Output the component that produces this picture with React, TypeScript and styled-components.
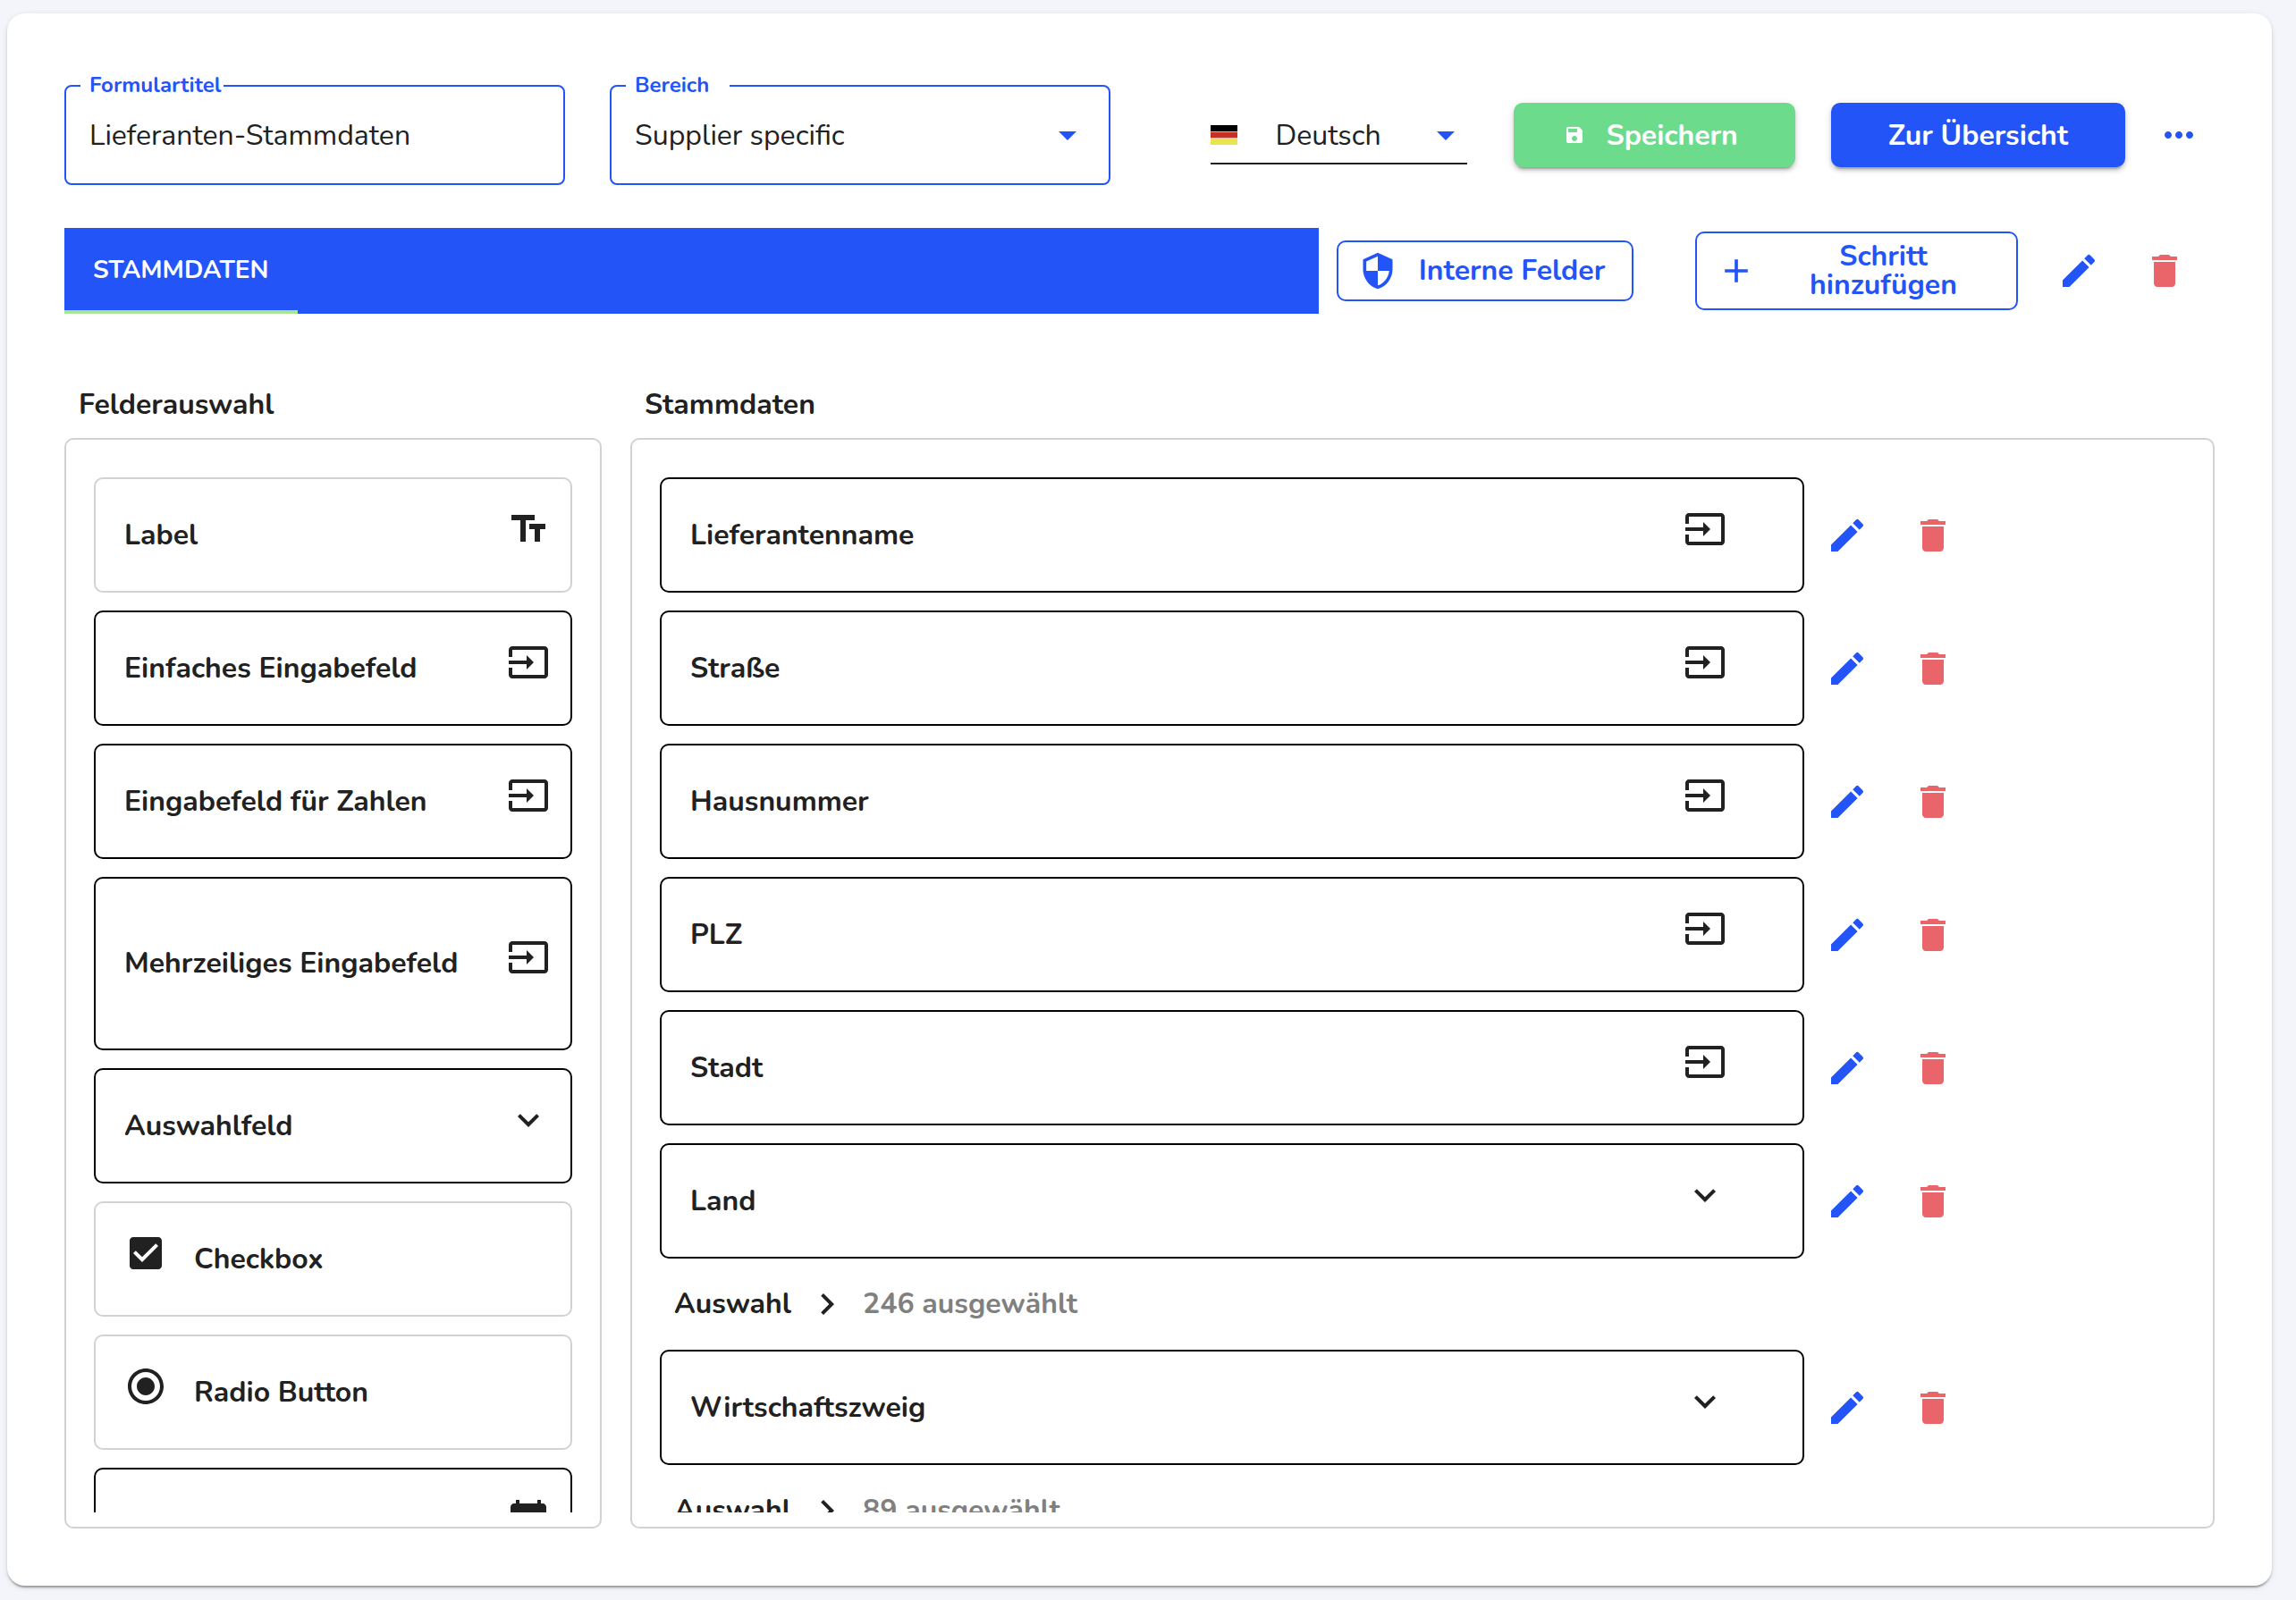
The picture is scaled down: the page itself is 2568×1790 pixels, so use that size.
import React from 'react';
import styled, { createGlobalStyle, css } from 'styled-components';

const color = {
  page: '#f4f5fb',
  blue: '#2354f8',
  green: '#6cdc8c',
  lime: '#a9e595',
  red: '#e96569',
  ink: '#212121',
  muted: '#808080',
  line: '#d2d2d2',
};

const GlobalStyle = createGlobalStyle`
  *, *::before, *::after { box-sizing: border-box; }
  body {
    margin: 0;
    background: ${color.page};
    color: ${color.ink};
    font-family: Nunito, Lato, 'Open Sans', sans-serif;
    font-size: 32px;
    line-height: 44px;
  }
  button, input, select { font: inherit; color: inherit; margin: 0; }
`;

/* ---------- icons ---------- */

const paths = {
  edit: 'M3 17.25V21h3.75L17.81 9.94l-3.75-3.75L3 17.25zM20.71 7.04c.39-.39.39-1.02 0-1.41l-2.34-2.34a.9959.9959 0 0 0-1.41 0l-1.83 1.83 3.75 3.75 1.83-1.83z',
  trash: 'M6 19c0 1.1.9 2 2 2h8c1.1 0 2-.9 2-2V7H6v12zM19 4h-3.5l-1-1h-5l-1 1H5v2h14V4z',
  more: 'M6 10c-1.1 0-2 .9-2 2s.9 2 2 2 2-.9 2-2-.9-2-2-2zm12 0c-1.1 0-2 .9-2 2s.9 2 2 2 2-.9 2-2-.9-2-2-2zm-6 0c-1.1 0-2 .9-2 2s.9 2 2 2 2-.9 2-2-.9-2-2-2z',
  save: 'M17 3H5c-1.11 0-2 .9-2 2v14c0 1.1.89 2 2 2h14c1.1 0 2-.9 2-2V7l-4-4zm-5 16c-1.66 0-3-1.34-3-3s1.34-3 3-3 3 1.34 3 3-1.34 3-3 3zm3-10H5V5h10v4z',
  shield: 'M12 1L3 5v6c0 5.55 3.84 10.74 9 12 5.16-1.26 9-6.45 9-12V5l-9-4zm0 10.99h7c-.53 4.12-3.28 7.79-7 8.94V12H5V6.3l7-3.11v8.8z',
  plus: 'M19 13h-6v6h-2v-6H5v-2h6V5h2v6h6v2z',
  triangle: 'M7 10l5 5 5-5z',
  text: 'M2.5 4v3h5v12h3V7h5V4h-13zm19 5h-9v3h3v7h3v-7h3V9z',
  input: 'M21 3.01H3c-1.1 0-2 .9-2 2V9h2V4.99h18v14.03H3V15H1v4.01c0 1.1.9 1.98 2 1.98h18c1.1 0 2-.88 2-1.98v-14c0-1.11-.9-2-2-2zM11 16l4-4-4-4v3H1v2h10v3z',
  down: 'M16.59 8.59L12 13.17 7.41 8.59 6 10l6 6 6-6z',
  right: 'M10 6L8.59 7.41 13.17 12l-4.58 4.59L10 18l6-6z',
  checkbox: 'M19 3H5c-1.11 0-2 .9-2 2v14c0 1.1.89 2 2 2h14c1.11 0 2-.9 2-2V5c0-1.1-.89-2-2-2zm-9 14l-5-5 1.41-1.41L10 14.17l7.59-7.59L19 8l-9 9z',
  radio: 'M12 7c-2.76 0-5 2.24-5 5s2.24 5 5 5 5-2.24 5-5-2.24-5-5-5zm0-5C6.48 2 2 6.48 2 12s4.48 10 10 10 10-4.48 10-10S17.52 2 12 2zm0 18c-4.42 0-8-3.58-8-8s3.58-8 8-8 8 3.58 8 8-3.58 8-8 8z',
  calendar: 'M20 3h-1V1h-2v2H7V1H5v2H4c-1.1 0-2 .9-2 2v16c0 1.1.9 2 2 2h16c1.1 0 2-.9 2-2V5c0-1.1-.9-2-2-2zm0 18H4V8h16v13z',
};
type IconName = keyof typeof paths;

const Svg = styled.svg<{ $size: number }>`
  display: block;
  flex: none;
  width: ${(p) => p.$size}px;
  height: ${(p) => p.$size}px;
  fill: currentColor;
`;

const Icon = ({ name, size = 48 }: { name: IconName; size?: number }) => (
  <Svg viewBox="0 0 24 24" $size={size} aria-hidden="true">
    <path d={paths[name]} />
  </Svg>
);

const FlagSvg = styled.svg`
  display: block;
  flex: none;
  width: 30px;
  height: 22px;
`;

const GermanFlag = () => (
  <FlagSvg viewBox="0 0 30 22" aria-hidden="true">
    <rect width="30" height="22" fill="#e8b0a8" />
    <rect width="30" height="7" fill="#000" />
    <rect y="8" width="30" height="6" fill="#c72f22" />
    <rect y="15" width="30" height="7" fill="#e9e44c" />
  </FlagSvg>
);

/* ---------- page frame ---------- */

const Page = styled.div`
  display: flex;
  height: 100vh;
  padding: 15px 27px 16px 8px;
`;

const Card = styled.main`
  flex: 1;
  min-width: 0;
  display: flex;
  flex-direction: column;
  padding: 80px 64px 64px;
  background: #fff;
  border-radius: 20px;
  box-shadow: 0 4px 2px -2px rgba(0, 0, 0, 0.2), 0 2px 2px rgba(0, 0, 0, 0.14),
    0 2px 6px rgba(0, 0, 0, 0.12);
`;

/* ---------- header ---------- */

const Header = styled.header`
  display: flex;
  align-items: center;
  margin-bottom: 48px;
`;

const Fields = styled.div`
  flex: 0 1 1170px;
  display: flex;
  gap: 50px;
`;

const Field = styled.div`
  position: relative;
  flex: 1;
  min-width: 0;
  height: 112px;
  border: 2px solid ${color.blue};
  border-radius: 8px;
`;

const FieldLabel = styled.label<{ $gap: number }>`
  position: absolute;
  top: -18px;
  left: 16px;
  padding: 0 ${(p) => p.$gap}px 0 10px;
  background: #fff;
  color: ${color.blue};
  font-size: 24px;
  font-weight: 700;
  line-height: 32px;
`;

const control = css`
  width: 100%;
  height: 100%;
  border: 0;
  outline: 0;
  background: transparent;
  appearance: none;
`;

const TextInput = styled.input`
  ${control}
  padding: 0 26px;
`;

const Select = styled.select<{ $indent: number }>`
  ${control}
  padding: 2px 48px 0 ${(p) => p.$indent}px;
`;

/* Drop-down arrow laid over the right end of a select */
const Arrow = styled.span<{ $right: number }>`
  position: absolute;
  top: 0;
  bottom: 0;
  right: ${(p) => p.$right}px;
  display: flex;
  align-items: center;
  color: ${color.blue};
  pointer-events: none;
`;

const Actions = styled.div`
  display: flex;
  align-items: center;
  margin-left: auto;
`;

const Language = styled.div`
  display: flex;
  align-items: center;
  width: 287px;
  height: 66px;
  margin-right: 52px;
  padding-top: 2px;
  border-bottom: 2px solid ${color.ink};
`;

const LanguagePicker = styled.div`
  position: relative;
  flex: 1;
  height: 100%;
`;

const SolidButton = styled.button<{ $bg: string }>`
  display: flex;
  align-items: center;
  height: 72px;
  padding: 2px 64px 0;
  border: 0;
  border-radius: 10px;
  background: ${(p) => p.$bg};
  color: #fff;
  font-weight: 700;
  white-space: nowrap;
  box-shadow: 0 6px 2px -4px rgba(0, 0, 0, 0.2), 0 4px 4px rgba(0, 0, 0, 0.14),
    0 2px 10px rgba(0, 0, 0, 0.12);

  & + & { margin-left: 40px; }
  svg { margin: 0 23px 2px -8px; }
`;

const IconButton = styled.button<{ $color: string }>`
  display: flex;
  align-items: center;
  justify-content: center;
  flex: none;
  width: 96px;
  height: 96px;
  padding: 0;
  border: 0;
  background: transparent;
  color: ${(p) => p.$color};
`;

const MoreButton = styled(IconButton)`
  width: 80px;
  margin-left: 20px;
`;

/* ---------- step bar ---------- */

const StepBar = styled.div`
  display: flex;
  align-items: center;
  margin-bottom: 80px;
`;

const Tabs = styled.div`
  flex: 1;
  display: flex;
  height: 96px;
  margin-right: 20px;
  background: ${color.blue};
`;

const Tab = styled.button`
  padding: 2px 32px 0;
  border: 0;
  border-bottom: 4px solid ${color.lime};
  background: transparent;
  color: #fff;
  font-size: 28px;
  font-weight: 700;
`;

const StepActions = styled.div`
  display: flex;
  align-items: center;
  gap: 69px;
`;

const OutlineButton = styled.button<{ $width: number }>`
  display: flex;
  align-items: center;
  gap: 22px;
  flex: none;
  width: ${(p) => p.$width}px;
  padding: 10px 28px 10px 22px;
  border: 2px solid ${color.blue};
  border-radius: 10px;
  background: transparent;
  color: ${color.blue};
  font-weight: 700;
  line-height: 32px;
`;

const ButtonText = styled.span`
  flex: 1;
`;

const StepTools = styled.div`
  display: flex;
  margin: 0 8px 0 20px;
`;

/* ---------- panels ---------- */

const Columns = styled.div`
  flex: 1;
  min-height: 0;
  display: grid;
  grid-template-columns: minmax(0, 601fr) minmax(0, 1772fr);
  column-gap: 32px;
`;

const Column = styled.section`
  display: flex;
  flex-direction: column;
  min-height: 0;
`;

const ColumnTitle = styled.h2`
  margin: 0 0 15px;
  padding-left: 16px;
  font-size: 32px;
  font-weight: 700;
  line-height: 44px;
`;

const Panel = styled.div`
  flex: 1;
  min-height: 0;
  display: flex;
  padding: 0 31px 16px;
  border: 2px solid ${color.line};
  border-radius: 10px;
`;

const List = styled.ul`
  flex: 1;
  display: flex;
  flex-direction: column;
  gap: 20px;
  margin: 0;
  padding: 42px 0 0;
  list-style: none;
  overflow-y: auto;
  scrollbar-width: none;
`;

const Entry = styled.li`
  display: flex;
  align-items: center;
  flex: none;
`;

const Box = styled.div<{ $light?: boolean; $tall?: boolean; $placed?: boolean }>`
  display: flex;
  align-items: center;
  flex: none;
  width: ${(p) => (p.$placed ? '75%' : '100%')};
  height: ${(p) => (p.$tall ? 194 : 129)}px;
  padding: 0 ${(p) => (p.$placed ? 85 : 23)}px 0 32px;
  border: 2px solid ${(p) => (p.$light ? color.line : '#000')};
  border-radius: 10px;
  font-weight: 700;
`;

const BoxText = styled.span`
  flex: 1;
`;

const BoxIcon = styled.span`
  padding-bottom: 14px;
`;

const Choice = styled.label`
  display: flex;
  align-items: center;
  gap: 30px;
`;

const ChoiceMark = styled.span`
  position: relative;
  padding-bottom: 14px;
`;

const ChoiceInput = styled.input`
  position: absolute;
  inset: 0;
  width: 48px;
  height: 48px;
  opacity: 0;
`;

const Selection = styled.li`
  display: flex;
  align-items: center;
  flex: none;
  gap: 16px;
  padding: 7px 16px;
  font-weight: 700;
`;

const Count = styled.span`
  color: ${color.muted};
`;

/* ---------- data ---------- */

type PaletteItem = {
  label?: string;
  icon: IconName;
  light?: boolean;
  tall?: boolean;
  choice?: 'checkbox' | 'radio';
};

const palette: PaletteItem[] = [
  { label: 'Label', icon: 'text', light: true },
  { label: 'Einfaches Eingabefeld', icon: 'input' },
  { label: 'Eingabefeld für Zahlen', icon: 'input' },
  { label: 'Mehrzeiliges Eingabefeld', icon: 'input', tall: true },
  { label: 'Auswahlfeld', icon: 'down' },
  { label: 'Checkbox', icon: 'checkbox', light: true, choice: 'checkbox' },
  { label: 'Radio Button', icon: 'radio', light: true, choice: 'radio' },
  { icon: 'calendar' },
];

const placed: { label: string; icon: IconName; selected?: number }[] = [
  { label: 'Lieferantenname', icon: 'input' },
  { label: 'Straße', icon: 'input' },
  { label: 'Hausnummer', icon: 'input' },
  { label: 'PLZ', icon: 'input' },
  { label: 'Stadt', icon: 'input' },
  { label: 'Land', icon: 'down', selected: 246 },
  { label: 'Wirtschaftszweig', icon: 'down', selected: 89 },
];

const PaletteEntry = ({ item }: { item: PaletteItem }) => (
  <Entry>
    <Box $light={item.light} $tall={item.tall}>
      {item.choice ? (
        <Choice>
          <ChoiceMark>
            <ChoiceInput type={item.choice} defaultChecked />
            <Icon name={item.icon} />
          </ChoiceMark>
          {item.label}
        </Choice>
      ) : (
        <>
          <BoxText>{item.label}</BoxText>
          <BoxIcon>
            <Icon name={item.icon} />
          </BoxIcon>
        </>
      )}
    </Box>
  </Entry>
);

const EditButtons = () => (
  <>
    <IconButton type="button" $color={color.blue} aria-label="Bearbeiten">
      <Icon name="edit" />
    </IconButton>
    <IconButton type="button" $color={color.red} aria-label="Löschen">
      <Icon name="trash" />
    </IconButton>
  </>
);

export default function App() {
  return (
    <>
      <GlobalStyle />
      <Page>
        <Card>
          <Header>
            <Fields>
              <Field>
                <FieldLabel htmlFor="title" $gap={2}>Formulartitel</FieldLabel>
                <TextInput id="title" type="text" defaultValue="Lieferanten-Stammdaten" />
              </Field>
              <Field>
                <FieldLabel htmlFor="area" $gap={23}>Bereich</FieldLabel>
                <Select id="area" $indent={26}>
                  <option>Supplier specific</option>
                </Select>
                <Arrow $right={22}>
                  <Icon name="triangle" />
                </Arrow>
              </Field>
            </Fields>
            <Actions>
              <Language>
                <GermanFlag />
                <LanguagePicker>
                  <Select $indent={42} aria-label="Sprache">
                    <option>Deutsch</option>
                  </Select>
                  <Arrow $right={0}>
                    <Icon name="triangle" />
                  </Arrow>
                </LanguagePicker>
              </Language>
              <SolidButton type="button" $bg={color.green}>
                <Icon name="save" size={24} />
                Speichern
              </SolidButton>
              <SolidButton type="button" $bg={color.blue}>Zur Übersicht</SolidButton>
              <MoreButton type="button" $color={color.blue} aria-label="Mehr">
                <Icon name="more" />
              </MoreButton>
            </Actions>
          </Header>

          <StepBar>
            <Tabs role="tablist">
              <Tab type="button" role="tab" aria-selected="true">STAMMDATEN</Tab>
            </Tabs>
            <StepActions>
              <OutlineButton type="button" $width={332}>
                <Icon name="shield" size={44} />
                <ButtonText>Interne Felder</ButtonText>
              </OutlineButton>
              <OutlineButton type="button" $width={361}>
                <Icon name="plus" size={44} />
                <ButtonText>Schritt hinzufügen</ButtonText>
              </OutlineButton>
            </StepActions>
            <StepTools>
              <EditButtons />
            </StepTools>
          </StepBar>

          <Columns>
            <Column>
              <ColumnTitle>Felderauswahl</ColumnTitle>
              <Panel>
                <List>
                  {palette.map((item) => (
                    <PaletteEntry key={item.label ?? item.icon} item={item} />
                  ))}
                </List>
              </Panel>
            </Column>
            <Column>
              <ColumnTitle>Stammdaten</ColumnTitle>
              <Panel>
                <List>
                  {placed.map((field) => (
                    <React.Fragment key={field.label}>
                      <Entry>
                        <Box $placed>
                          <BoxText>{field.label}</BoxText>
                          <BoxIcon>
                            <Icon name={field.icon} />
                          </BoxIcon>
                        </Box>
                        <EditButtons />
                      </Entry>
                      {field.selected && (
                        <Selection>
                          <span>Auswahl</span>
                          <Icon name="right" />
                          <Count>{field.selected} ausgewählt</Count>
                        </Selection>
                      )}
                    </React.Fragment>
                  ))}
                </List>
              </Panel>
            </Column>
          </Columns>
        </Card>
      </Page>
    </>
  );
}
